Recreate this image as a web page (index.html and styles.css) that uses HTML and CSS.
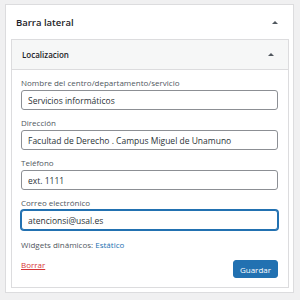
FILE: index.html
```html
<!DOCTYPE html>
<html lang="es">
<head>
  <meta charset="UTF-8">
  <title>Barra lateral</title>
  <link rel="stylesheet" href="styles.css">
</head>
<body>
  <div class="panel">
    <div class="panel-head">
      <h2>Barra lateral</h2>
      <span class="toggle"></span>
    </div>
    <div class="widget">
      <div class="widget-head">
        <h3>Localizacion</h3>
        <span class="toggle"></span>
      </div>
      <div class="widget-body">
        <div class="field">
          <label>Nombre del centro/departamento/servicio</label>
          <input type="text" value="Servicios informáticos">
        </div>
        <div class="field">
          <label>Dirección</label>
          <input type="text" value="Facultad de Derecho . Campus Miguel de Unamuno">
        </div>
        <div class="field">
          <label>Teléfono</label>
          <input type="text" value="ext. 1111">
        </div>
        <div class="field">
          <label>Correo electrónico</label>
          <input type="text" class="focused" value="atencionsi@usal.es" autofocus>
        </div>
        <p class="dynamic">Widgets dinámicos: <a href="#">Estático</a></p>
        <div class="actions">
          <a href="#" class="delete">Borrar</a>
          <button>Guardar</button>
        </div>
      </div>
    </div>
  </div>
</body>
</html>
```

FILE: styles.css
```css
/* fondo y fuente general */
body {
  margin: 0;
  padding: 4px 6px 0 5px;
  background: #f0f0f1;
  font-family: 'Open Sans', 'Noto Sans', sans-serif;
  color: #3c434a;
}

/* caja exterior */
.panel {
  background: #fff;
  border: 1px solid #dcdcde;
  height: 287px;
}
.panel-head {
  display: flex;
  align-items: center;
  justify-content: space-between;
  height: 34px;
  padding: 0 15px 0 10px;
}
.panel-head h2 {
  margin: 0;
  font-size: 9.5px;
  font-weight: 600;
  color: #1d2327;
}

/* flecha de plegado */
.toggle {
  width: 0;
  height: 0;
  border-left: 3px solid transparent;
  border-right: 3px solid transparent;
  border-bottom: 3px solid #50575e;
}

/* widget interior */
.widget {
  margin: 0 4px 0 5px;
  border: 1px solid #dcdcde;
  height: 247px;
}
.widget-head {
  display: flex;
  align-items: center;
  justify-content: space-between;
  height: 29px;
  padding: 0 14px 0 10px;
  background: #f6f7f7;
  border-bottom: 1px solid #dcdcde;
}
.widget-head h3 {
  margin: 0;
  font-size: 8px;
  font-weight: 600;
  color: #1d2327;
}
.widget-body {
  padding: 6px 10px 0 9px;
}

/* campos del formulario */
.field {
  margin-bottom: 6px;
}
.field label {
  display: block;
  font-size: 8px;
  line-height: 14px;
  color: #50575e;
}
.field input {
  display: block;
  box-sizing: border-box;
  width: 100%;
  height: 20px;
  margin: 0;
  padding: 0 6px;
  font-family: inherit;
  font-size: 8.5px;
  color: #2c3338;
  border: 1px solid #8c8f94;
  border-radius: 3px;
  background: #fff;
  outline: none;
}
.field input.focused {
  border-color: #2271b1;
  box-shadow: 0 0 0 1px #2271b1;
}

.dynamic {
  margin: 8px 0 0;
  font-size: 8px;
  line-height: 14px;
  color: #50575e;
}
.dynamic a {
  color: #2271b1;
  text-decoration: none;
}

/* botones */
.actions {
  display: flex;
  justify-content: space-between;
  align-items: flex-start;
  margin-top: 6px;
}
.delete {
  font-size: 8px;
  line-height: 14px;
  color: #d63638;
}
button {
  height: 18px;
  margin-top: 2px;
  padding: 0 6px;
  font-family: inherit;
  font-size: 8px;
  color: #fff;
  background: #2271b1;
  border: 1px solid #2271b1;
  border-radius: 3px;
}
```
